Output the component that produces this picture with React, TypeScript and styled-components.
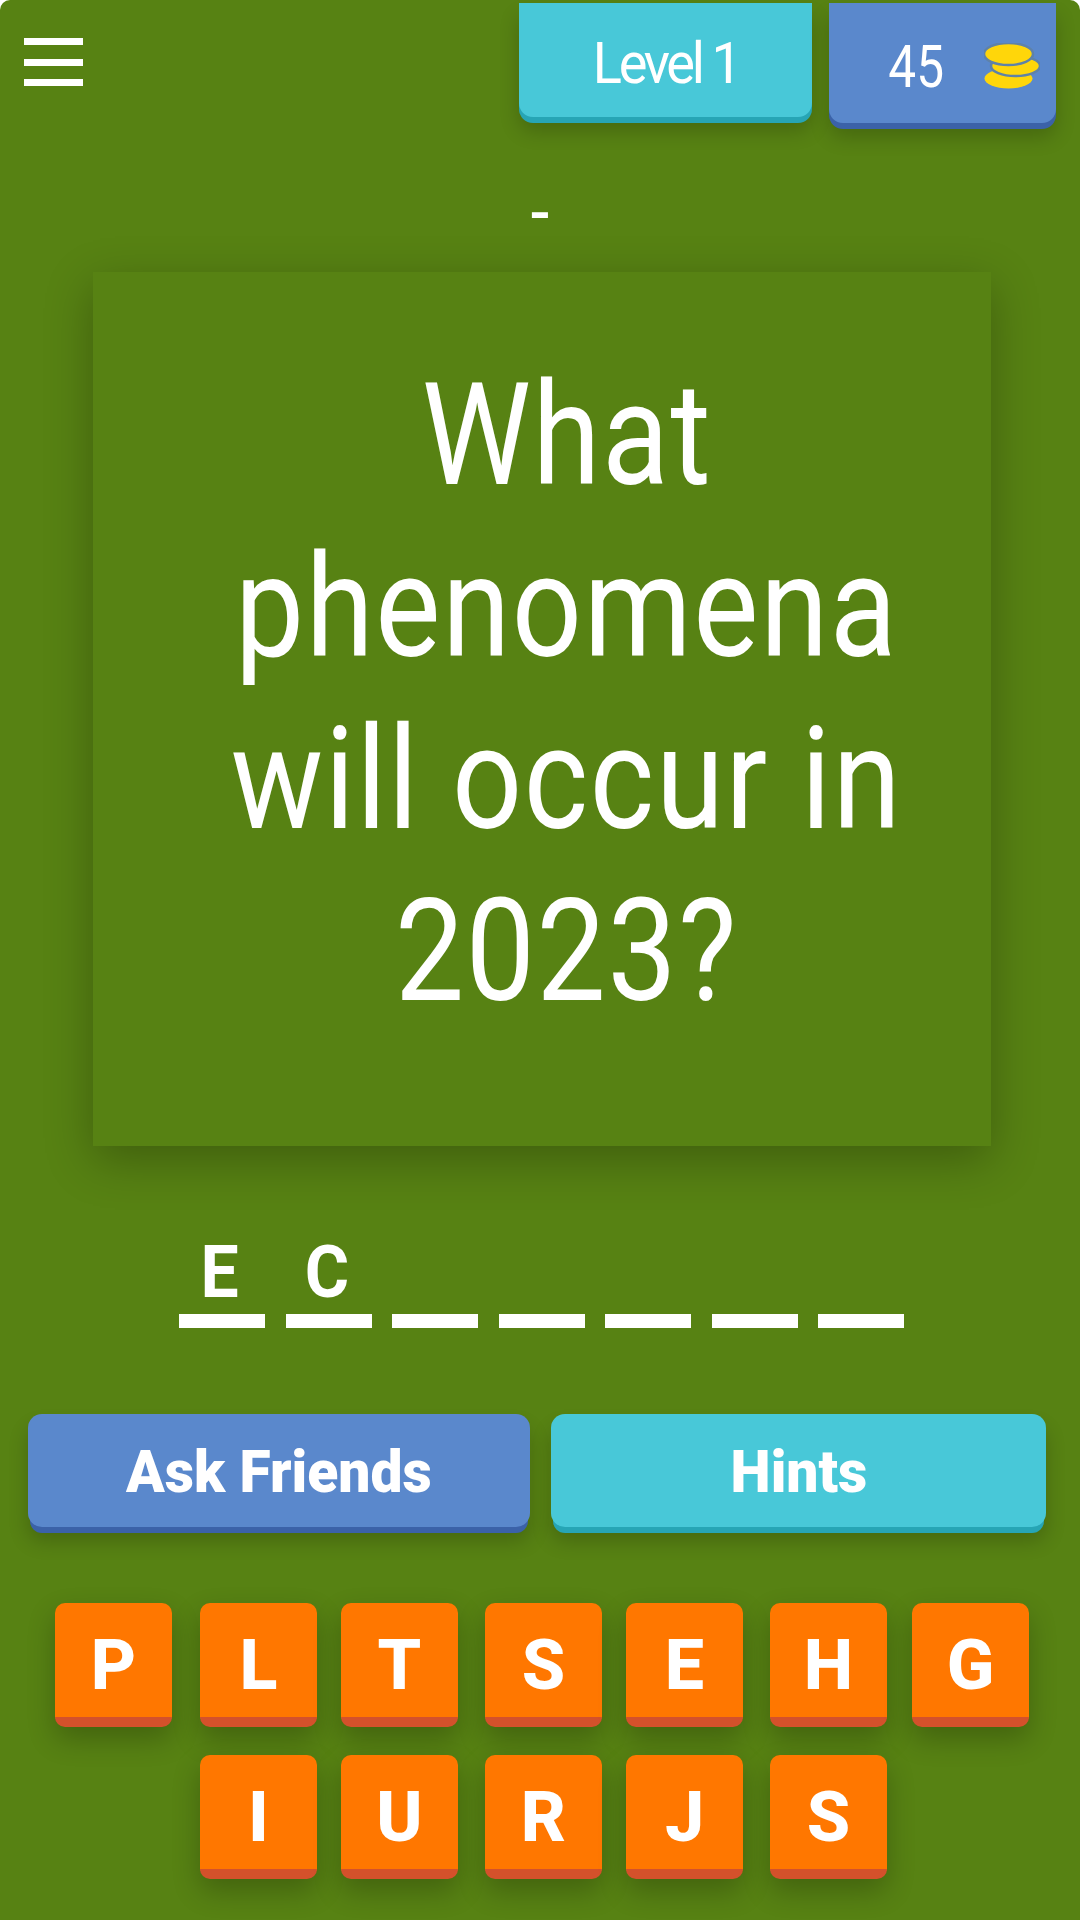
import React from "react";
import styled, { createGlobalStyle } from "styled-components";

const Global = createGlobalStyle`
  html, body { margin: 0; padding: 0; background: #fff; }
  body { font-family: Roboto, "Liberation Sans", sans-serif; }
`;

const Screen = styled.div`
  width: 1080px;
  height: 1920px;
  background: #578213;
  border-radius: 10px 10px 0 0;
  overflow: hidden;
  color: #fff;
  box-sizing: border-box;
  padding-top: 3px;
`;

const TopBar = styled.div`
  display: flex;
  align-items: flex-start;
  height: 127px;
  padding: 0 24px;
`;

const Burger = styled.div`
  display: flex;
  flex-direction: column;
  gap: 13.5px;
  width: 59px;
  margin-top: 35px;
  margin-right: auto;
`;

const BurgerBar = styled.span`
  display: block;
  height: 7px;
  background: #fff;
`;

const TopPanel = styled.div<{ $face: string; $edge: string; $w: number; $h: number }>`
  display: flex;
  align-items: center;
  justify-content: center;
  width: ${(p) => p.$w}px;
  height: ${(p) => p.$h}px;
  background: ${(p) => p.$face};
  border-radius: 0 0 14px 14px;
  box-shadow: 0 6px 0 ${(p) => p.$edge}, 0 14px 20px rgba(0, 0, 0, 0.2);
`;

const LevelPanel = styled(TopPanel)`
  margin-right: 17px;
`;

const ThinLabel = styled.span`
  display: inline-block;
  font-size: 57px;
  font-weight: 400;
  line-height: 1;
  letter-spacing: -3.5px;
  padding-top: 6px;
  transform: scaleX(0.95);
`;

const CoinCount = styled.span`
  display: inline-block;
  font-size: 59px;
  line-height: 1;
  padding-top: 6px;
  transform: scaleX(0.84);
  margin-left: -8px;
  margin-right: 34px;
`;

const CoinIcon = styled.svg`
  width: 56px;
  height: 46px;
  margin-top: 6px;
  margin-right: -46px;
`;

const Dash = styled.div`
  height: 60px;
  margin-top: 53px;
  text-align: center;
  font-size: 62px;
  font-weight: 500;
  line-height: 60px;
`;

const Card = styled.div`
  width: 898px;
  height: 874px;
  margin: 29px 0 0 93px;
  box-sizing: border-box;
  padding: 0 0 32px 50px;
  display: flex;
  flex-direction: column;
  align-items: center;
  justify-content: center;
  background: #578213;
  box-shadow: 0 14px 44px rgba(0, 0, 0, 0.28);
`;

const QuestionLine = styled.div`
  font-size: 143px;
  line-height: 172px;
  letter-spacing: 2px;
  white-space: nowrap;
  transform: scaleX(0.86);
`;

const AnswerRow = styled.div`
  display: flex;
  gap: 20.5px;
  margin: 84px 0 0 179px;
`;

const Slot = styled.div`
  width: 86px;
  display: flex;
  flex-direction: column;
  align-items: center;
`;

const SlotLetter = styled.span`
  height: 84px;
  font-size: 73px;
  font-weight: 700;
  line-height: 84px;
  margin-left: -4px;
  transform: scaleX(0.93);
`;

const SlotLine = styled.span`
  display: block;
  width: 86px;
  height: 14px;
  background: #fff;
`;

const Actions = styled.div`
  display: flex;
  gap: 21px;
  margin-top: 86px;
  padding-left: 28px;
`;

const ActionButton = styled.div<{ $face: string; $edge: string; $w: number }>`
  width: ${(p) => p.$w}px;
  height: 113px;
  display: flex;
  align-items: center;
  justify-content: center;
  background: ${(p) => p.$face};
  border-radius: 14px;
  box-shadow: 0 8px 0 -2px ${(p) => p.$edge}, 0 14px 20px rgba(0, 0, 0, 0.2);
`;

const ActionLabel = styled.span`
  display: inline-block;
  font-size: 60px;
  font-weight: 900;
  line-height: 1;
  padding-top: 3px;
  transform: scaleX(0.95);
`;

const Tiles = styled.div`
  display: grid;
  grid-template-columns: 145px 141px 144px 141px 144px 142px 117px;
  row-gap: 28px;
  margin-top: 76px;
  padding-left: 55px;
`;

const Tile = styled.div<{ $col: number }>`
  grid-column: ${(p) => p.$col};
  width: 117px;
  height: 124px;
  box-sizing: border-box;
  border-bottom: 10px solid #d4512b;
  border-radius: 10px;
  background: #ff7700;
  display: flex;
  align-items: center;
  justify-content: center;
  padding-top: 10px;
  font-size: 70px;
  font-weight: 800;
  line-height: 1;
  box-shadow: 0 12px 28px rgba(0, 0, 0, 0.24);
`;

const rows = [
  ["P", "L", "T", "S", "E", "H", "G"],
  ["", "I", "U", "R", "J", "S", ""],
];

export default function App() {
  return (
    <Screen>
      <Global />
      <TopBar>
        <Burger>
          <BurgerBar />
          <BurgerBar />
          <BurgerBar />
        </Burger>
        <LevelPanel $face="#48c8d8" $edge="#27a5b5" $w={293} $h={114}>
          <ThinLabel>Level 1</ThinLabel>
        </LevelPanel>
        <TopPanel $face="#5a88cc" $edge="#3b62a8" $w={227} $h={120}>
          <CoinCount>45</CoinCount>
          <CoinIcon viewBox="0 0 56 46">
            <ellipse cx="24.5" cy="35.5" rx="24" ry="10" fill="#ffd60a" />
            <ellipse cx="31.5" cy="23" rx="24.5" ry="10" fill="#ffd60a" stroke="#5f82a8" strokeWidth="2.5" />
            <ellipse cx="24.5" cy="11" rx="24.5" ry="11" fill="#ffd60a" stroke="#5f82a8" strokeWidth="2.5" />
          </CoinIcon>
        </TopPanel>
      </TopBar>
      <Dash>-</Dash>
      <Card>
        <QuestionLine>What</QuestionLine>
        <QuestionLine>phenomena</QuestionLine>
        <QuestionLine>will occur in</QuestionLine>
        <QuestionLine>2023?</QuestionLine>
      </Card>
      <AnswerRow>
        {["E", "C", "", "", "", "", ""].map((c, i) => (
          <Slot key={i}>
            <SlotLetter>{c}</SlotLetter>
            <SlotLine />
          </Slot>
        ))}
      </AnswerRow>
      <Actions>
        <ActionButton $face="#5a88cc" $edge="#3b62a8" $w={502}>
          <ActionLabel>Ask Friends</ActionLabel>
        </ActionButton>
        <ActionButton $face="#48c8d8" $edge="#27a5b5" $w={495}>
          <ActionLabel>Hints</ActionLabel>
        </ActionButton>
      </Actions>
      <Tiles>
        {rows.flatMap((row, r) =>
          row.map((c, i) => (c ? <Tile key={`${r}-${i}`} $col={i + 1}>{c}</Tile> : null))
        )}
      </Tiles>
    </Screen>
  );
}
